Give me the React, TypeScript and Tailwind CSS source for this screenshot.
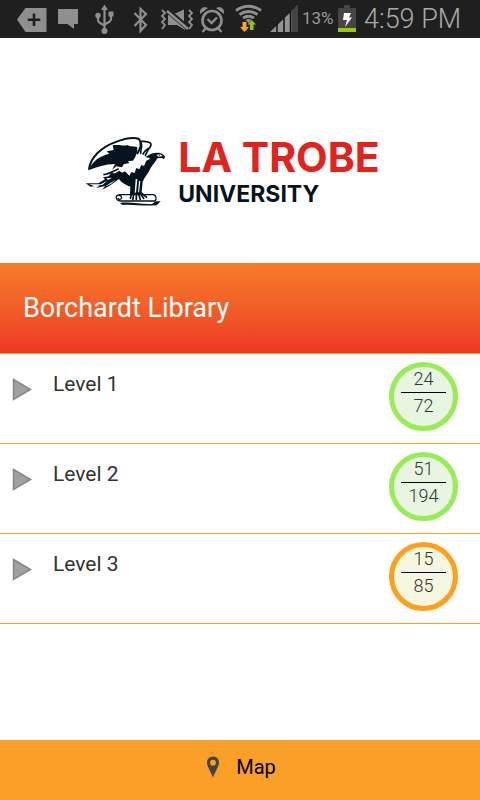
import React from "react";

type Level = { name: string; free: number; total: number; tone: "green" | "orange" };

const levels: Level[] = [
  { name: "Level 1", free: 24, total: 72, tone: "green" },
  { name: "Level 2", free: 51, total: 194, tone: "green" },
  { name: "Level 3", free: 15, total: 85, tone: "orange" },
];

const tones = {
  green: "border-[#98ec55] bg-[#e8f5e0]",
  orange: "border-[#ff9f1c] bg-[#f5f6e0]",
};

function StatusIcons() {
  return (
    <svg width="282" height="38" viewBox="0 0 282 38" fill="#8f8f8f" aria-hidden="true">
      <path d="M0 19.500 L8.500 8 H29.500 V32 H8.500 Z" />
      <path d="M17 13.500 V26 M10.700 19.700 H23.300" stroke="#1f1f1f" strokeWidth="2.600" />
      <path d="M41 9 H61 V24 H57 V29 L50.500 24 H41 Z" />
      <g fill="none" stroke="#8f8f8f" strokeWidth="2.200">
        <path d="M87.500 9 V31 M81 17 V20 Q81 22 83 23 L87.500 25.500 M94 15 V19 Q94 21 92 22 L87.500 24.500" />
        <path d="M117.500 13 L129 25 L123.500 31 V9 L129 14 L117.500 26" />
      </g>
      <path d="M87.500 4.500 L91 10 H84 Z" />
      <circle cx="81" cy="15.500" r="2.700" />
      <rect x="91.500" y="11.500" width="5" height="5" />
      <circle cx="87.500" cy="31" r="3" />
      <path d="M151 15 H156 L168 27 V30 L160 25 H151 Z M157 14 L167 9.500 V24 Z" />
      <path d="M151 11 L172 29" stroke="#1f1f1f" strokeWidth="5" />
      <path d="M150 11 L171 29" stroke="#8f8f8f" strokeWidth="2.500" />
      <path d="M145 10 L148 13 L145 16 L148 19 L145 22 L148 25 L145 29 M172 10 L175 13 L172 16 L175 19 L172 22 L175 25 L172 29" fill="none" stroke="#8f8f8f" strokeWidth="1.800" />
      <circle cx="195" cy="20.500" r="9.500" fill="none" stroke="#8f8f8f" strokeWidth="2.600" />
      <path d="M190.500 19 L194.500 23 L200 17.500 M189 28 L185.500 32 M201 28 L204.500 32" fill="none" stroke="#8f8f8f" strokeWidth="2.300" />
      <path d="M183 14 Q182 8 188 7 L191 8 Z M207 14 Q208 8 202 7 L199 8 Z" />
      <g fill="none" stroke="#8f8f8f" strokeWidth="2.800">
        <path d="M219 10.500 Q231.500 2 244 10.500" />
        <path d="M222.500 14.500 Q231.500 8.500 240.500 14.500" />
        <path d="M226 18 Q231.500 14.500 237 18" />
      </g>
      <path d="M228.500 20 Q231.500 18 234.500 20 L231.500 23 Z" />
      <path d="M225.500 22 H229.500 V27 H232 L227.500 32 L223 27 H225.500 Z" fill="#ffa42c" />
      <path d="M233 30 H236.500 V24.500 H239 L234.700 20 L230.500 24.500 H233 Z" fill="#91c900" />
      <path d="M253 32 L281 5 V32 Z" fill="#949494" />
      <path d="M274.500 11 L281 5 V32 H274.500 Z" fill="#444" />
      <path d="M260 24 V32 M267 18 V32 M273.500 11 V32" stroke="#111" strokeWidth="1.500" />
    </svg>
  );
}

function BatteryIcon() {
  return (
    <svg width="18" height="28" viewBox="0 0 18 28" aria-hidden="true">
      <path d="M0 3 H6 V0 H12 V3 H18 V24 H0 Z" fill="#454545" />
      <rect y="23" width="18" height="4" fill="#98cc00" />
      <path d="M6 8 H13 L11 12.500 H14 L7 22 L9 15 H5 Z" fill="#fff" />
    </svg>
  );
}

function Eagle() {
  return (
    <svg width="90" height="85" viewBox="0 0 270 255" fill="#06141f" aria-hidden="true">
      {/* raised wing */}
      <path d="M27 118 C31 82 63 51 112 34 C140 24 164 22 177 27 C187 41 180 59 171 72" fill="none" stroke="#06141f" strokeWidth="6" />
      <path d="M24 121 C38 93 60 77 88 71 L80 64 L101 60 L98 46 C119 43 132 50 142 45 C151 51 160 47 172 52 C173 68 166 83 159 92 L144 93 L148 99 L131 103 L126 112 L109 109 L96 120 L105 102 C76 102 50 112 24 121 Z" />
      {/* wing's trailing edge */}
      <path d="M70 134 C90 131 104 121 116 116" fill="none" stroke="#06141f" strokeWidth="5" />
      {/* far shoulder */}
      <path d="M180 33 C191 35 204 34 211 39 C218 46 208 53 204 60 C200 67 199 72 195 77 M182 36 C190 50 180 62 182 72 M188 74 C193 65 198 58 207 55" fill="none" stroke="#06141f" strokeWidth="5" />
      {/* body, head and tail */}
      <path d="M193 82 C206 77 211 68 232 68 C243 68 253 73 255 80 L252 88 L246 84 L232 85 C227 97 219 101 212 114 C205 130 193 143 188 155 L184 195 H150 L151 170 C136 166 124 157 117 147 L91 166 L67 179 L75 168 L48 174 L60 166 L32 170 L17 160 L55 160 L75 148 L69 142 L86 139 L93 129 L105 130 L118 122 L126 128 L135 124 L148 137 L154 126 L164 129 L169 114 L178 118 L184 105 L192 108 L199 92 L211 86 C204 81 201 83 193 82 Z" />
      <path d="M28 163 L62 163 L82 152 L68 164 L43 169 Z M72 171 L96 156 L108 149 L92 162 Z M79 145 L96 143 L84 150 Z" fill="#fff" />
      <path d="M167 147 L164 190 L168 190 L172 148 Z M177 153 L174 190 L177 190 L181 154 Z" fill="#fff" />
      {/* face */}
      <path d="M229 75 L240 73 L249 78 L236 80 Z" fill="#fff" />
      <circle cx="238" cy="76" r="2" />
      {/* scroll */}
      <path d="M117 194 H221 C229 197 230 208 225 213 H124 C114 214 106 207 109 199 C112 194 124 195 125 202 C125 209 116 210 114 204" fill="#fff" stroke="#06141f" strokeWidth="4" />
      <path d="M120 219 C151 214 182 224 216 222 L227 214 L242 214 L230 226 C191 229 154 222 127 225 Z" />
      <path d="M155 187 L151 207 M162 187 L158 211 M169 187 L169 211 M175 187 L181 210 M179 187 L192 207 M182 187 L201 203" fill="none" stroke="#06141f" strokeWidth="5" />
    </svg>
  );
}

function LevelRow({ level }: { level: Level }) {
  return (
    <li className="border-b border-[#fba026]">
      <button type="button" className="flex h-[89px] w-full items-start pt-2 pr-[22px] pl-3 text-left">
        <svg className="mt-4 mr-[21px]" width="20" height="23" viewBox="0 0 20 23" aria-hidden="true">
          <path d="M1.500 1.500 L18.500 11.500 L1.500 21.500 Z" fill="#a0a0a0" stroke="#868686" strokeWidth="1.500" />
        </svg>
        <span className="mt-2 flex-1 text-[21px] leading-7 text-[#333]">{level.name}</span>
        <span
          className={`flex size-[69px] flex-col items-center rounded-full border-[5px] text-lg leading-[26px] font-light text-[#333] ${tones[level.tone]}`}
        >
          <span className="h-[26px] w-[45px] border-b border-black text-center leading-6">{level.free}</span>
          <span>{level.total}</span>
        </span>
      </button>
    </li>
  );
}

export default function App() {
  return (
    <div className="flex min-h-screen flex-col bg-white font-['Roboto',sans-serif]">
      <div className="flex h-[38px] items-center bg-[#1f1f1f] pl-[17px] text-[#999]">
        <StatusIcons />
        <span className="ml-[3px] w-9 text-[17px]">13%</span>
        <BatteryIcon />
        <span className="ml-1 flex-1 pl-1 text-[27px] leading-9 font-light whitespace-nowrap text-[#aaa]">4:59 PM</span>
      </div>

      <header className="flex h-[225px] justify-center pt-[92px] pr-5">
        <Eagle />
        <div className="pt-1 pl-2 font-['Inter',sans-serif] font-bold">
          <div className="text-[41px] leading-[46px] whitespace-nowrap text-[#e5211b]">LA TROBE</div>
          <div className="text-[23px] leading-7 text-[#06141f]">UNIVERSITY</div>
        </div>
      </header>

      <h1 className="flex h-[91px] items-center border-b border-[#fba026] bg-linear-to-b from-[#f57c29] to-[#ee3626] pl-[23px] text-[27px] text-white">
        Borchardt Library
      </h1>

      <main className="flex-1">
        <ul>
          {levels.map((level) => (
            <LevelRow key={level.name} level={level} />
          ))}
        </ul>
      </main>

      <button type="button" className="flex h-[60px] items-center justify-center gap-4 bg-[#fa9f28] pb-1.5 pl-0.5 text-xl text-black">
        <svg width="14" height="22" viewBox="0 0 14 22" aria-hidden="true">
          <path fillRule="evenodd" d="M7 0.500 C11 0.500 13 3.500 13 6.500 C13 10.500 9 16 7 21.500 C5 16 1 10.500 1 6.500 C1 3.500 3 0.500 7 0.500 Z M7 3.800 A2.900 2.900 0 1 0 7 9.600 A2.900 2.900 0 1 0 7 3.800 Z" fill="#444" />
        </svg>
        <span>Map</span>
      </button>
    </div>
  );
}
